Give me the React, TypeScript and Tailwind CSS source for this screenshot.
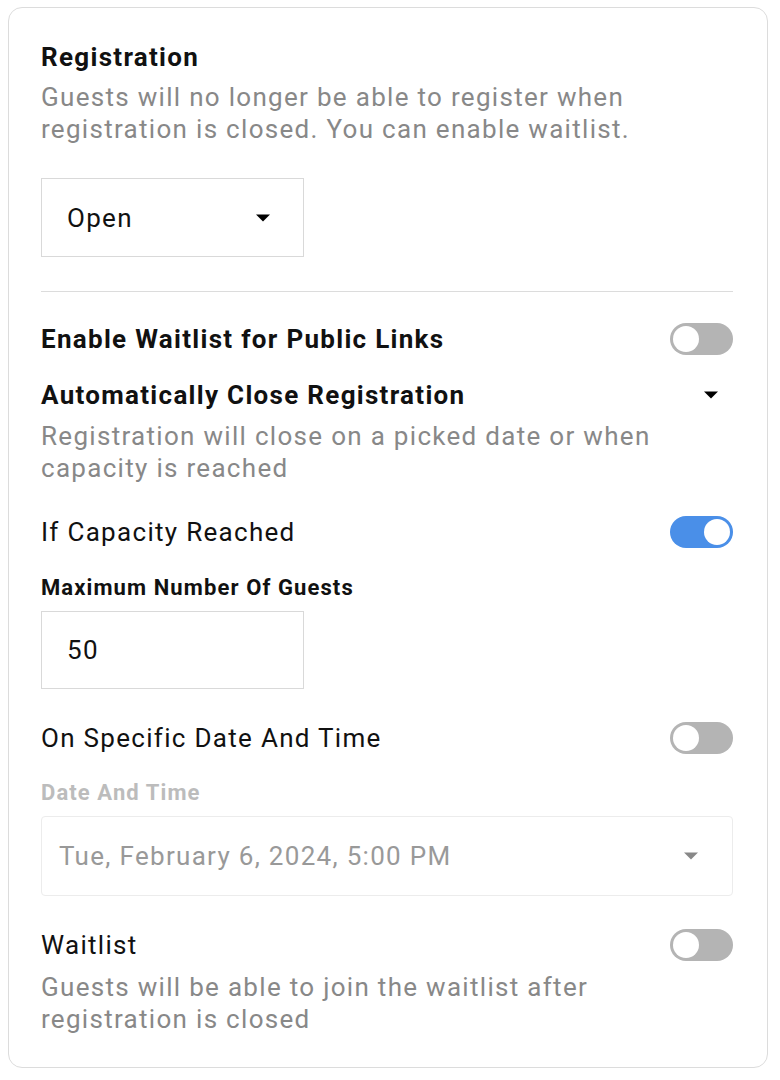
import React from "react";

function Caret({ color = "#000", className = "" }: { color?: string; className?: string }) {
  return (
    <svg width="16" height="8" viewBox="0 0 16 8" className={className}>
      <path d="M1 0.5 L15 0.5 L8 7.5 Z" fill={color} />
    </svg>
  );
}

function Toggle({ on }: { on?: boolean }) {
  return (
    <div
      className={
        "relative h-[32px] w-[63px] shrink-0 rounded-full " +
        (on ? "bg-[#4a8fe8]" : "bg-[#b4b4b4]")
      }
    >
      <div
        className={
          "absolute top-[3px] h-[26px] w-[26px] rounded-full bg-white " +
          (on ? "right-[3px]" : "left-[3px]")
        }
      />
    </div>
  );
}

const big = "text-[26px] leading-[32px] tracking-[0.05em]";
const small = "text-[22px] leading-[28px] tracking-[0.05em]";

export default function App() {
  return (
    <div
      className="min-h-[1080px] bg-white pl-[8px] pr-[12px] pt-[7px]"
      style={{ fontFamily: "Roboto, 'Noto Sans', Arial, sans-serif" }}
    >
      <div className="rounded-[14px] border border-[#dcdcdc] pl-8 pr-[34px] pt-[33px] pb-[32px]">
        <div className={big + " font-bold text-[#111]"}>Registration</div>
        <div className={big + " mt-2 text-[#888]"}>
          Guests will no longer be able to register when
          <br />
          registration is closed. You can enable waitlist.
        </div>

        <div className="mt-[33px] flex h-[79px] w-[263px] items-center justify-between border border-[#d9d9d9] pl-[25px] pr-[32px]">
          <span className={big + " text-[#111]"}>Open</span>
          <Caret />
        </div>

        <div className="mt-[34px] h-px bg-[#dcdcdc]" />

        <div className="mt-[31px] flex items-center justify-between">
          <span className={big + " font-bold text-[#111]"}>Enable Waitlist for Public Links</span>
          <Toggle />
        </div>

        <div className="mt-6 flex items-center justify-between">
          <span className={big + " font-bold text-[#111]"}>Automatically Close Registration</span>
          <Caret className="mr-[14px]" />
        </div>
        <div className={big + " mt-[9px] text-[#888]"}>
          Registration will close on a picked date or when
          <br />
          capacity is reached
        </div>

        <div className="mt-8 flex items-center justify-between">
          <span className={big + " text-[#111]"}>If Capacity Reached</span>
          <Toggle on />
        </div>

        <div className={small + " mt-[26px] font-bold text-[#111]"}>Maximum Number Of Guests</div>
        <div className="mt-[9px] flex h-[78px] w-[263px] items-center border border-[#d9d9d9] pl-[25px]">
          <span className={big + " text-[#111]"}>50</span>
        </div>

        <div className="mt-[33px] flex items-center justify-between">
          <span className={big + " text-[#111]"}>On Specific Date And Time</span>
          <Toggle />
        </div>

        <div className={small + " mt-[25px] font-bold text-[#bcbcbc]"}>Date And Time</div>
        <div className="mt-[9px] flex h-[80px] items-center justify-between rounded-[4px] border border-[#ececec] pl-[17px] pr-[33px]">
          <span className={big + " text-[#999]"}>Tue, February 6, 2024, 5:00 PM</span>
          <Caret color="#888" />
        </div>

        <div className="mt-[33px] flex items-center justify-between">
          <span className={big + " text-[#111]"}>Waitlist</span>
          <Toggle />
        </div>
        <div className={big + " mt-[10px] text-[#888]"}>
          Guests will be able to join the waitlist after
          <br />
          registration is closed
        </div>
      </div>
    </div>
  );
}
